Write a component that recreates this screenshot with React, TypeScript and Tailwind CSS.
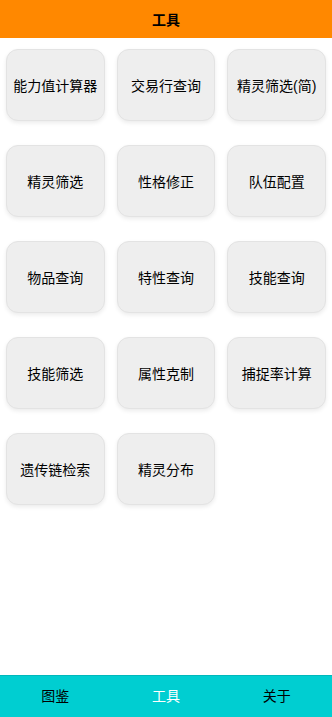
import React from "react";

// 工具列表
const tools = [
  "能力值计算器",
  "交易行查询",
  "精灵筛选(简)",
  "精灵筛选",
  "性格修正",
  "队伍配置",
  "物品查询",
  "特性查询",
  "技能查询",
  "技能筛选",
  "属性克制",
  "捕捉率计算",
  "遗传链检索",
  "精灵分布",
];

const tabs = ["图鉴", "工具", "关于"];

const App = () => {
  return (
    <div
      className="flex flex-col h-[717px] bg-white text-black"
      style={{ fontFamily: '"Liberation Sans", "Noto Sans CJK SC", sans-serif' }}
    >
      <header className="h-[38px] shrink-0 bg-[#ff8800] flex items-center justify-center pt-[2px]">
        <h1 className="text-[14px] font-bold">工具</h1>
      </header>

      <main className="flex-1 overflow-auto">
        <div className="grid grid-cols-3">
          {tools.map((t) => (
            <button
              key={t}
              className="mx-[6px] mt-[11px] mb-[13px] h-[72px] pt-[2px] rounded-[12px] bg-[#eeeeee] border border-[#e3e3e3] shadow-[0_2px_4px_rgba(0,0,0,0.08)] flex items-center justify-center text-[14px]"
            >
              {t}
            </button>
          ))}
        </div>
      </main>

      <nav className="h-[42px] shrink-0 bg-[#00ced1] border-t border-[#00b8bb] grid grid-cols-3">
        {tabs.map((t) => (
          <div
            key={t}
            className={`flex items-center justify-center text-[14px] ${t === "工具" ? "text-white" : "text-black"}`}
          >
            {t}
          </div>
        ))}
      </nav>
    </div>
  );
};

export default App;
